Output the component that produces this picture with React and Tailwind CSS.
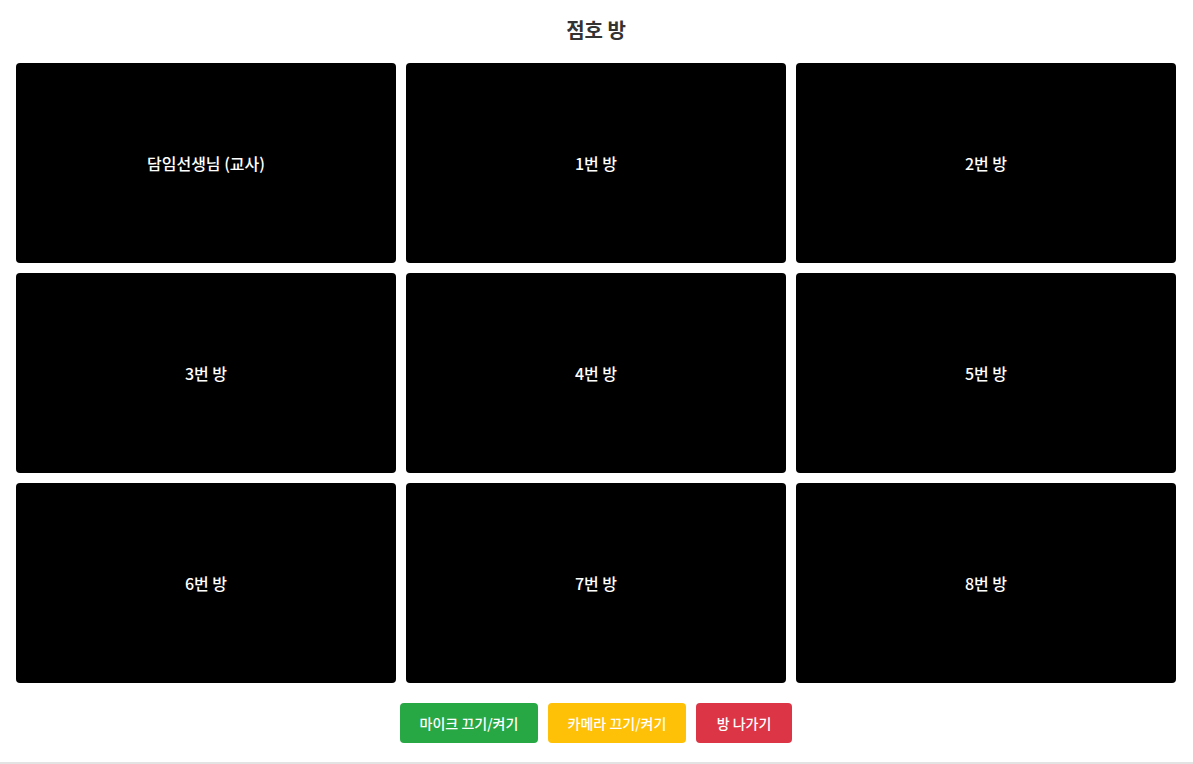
import React from "react";

const rooms = ["담임선생님 (교사)", "1번 방", "2번 방", "3번 방", "4번 방", "5번 방", "6번 방", "7번 방", "8번 방"];

export default function App() {
  return (
    <div
      className="bg-white flex flex-col h-[764px]"
      style={{ fontFamily: '"Noto Sans CJK KR", "Noto Sans", sans-serif' }}
    >
      <div className="pl-4 pr-[17px] pt-4 flex-1">
        <h2 className="text-center text-[20px] leading-7 font-bold text-[#333333] mb-[19px]">점호 방</h2>
        <div className="grid grid-cols-3 gap-[10px]">
          {rooms.map((r) => (
            <div key={r} className="h-[200px] bg-black rounded flex items-center justify-center text-white text-[16px] font-medium">
              {r}
            </div>
          ))}
        </div>
        <div className="flex justify-center gap-[10px] mt-5">
          <button className="h-10 w-[138px] rounded bg-[#28a745] text-white text-[14px] font-medium">마이크 끄기/켜기</button>
          <button className="h-10 w-[138px] rounded bg-[#ffc107] text-white text-[14px] font-medium">카메라 끄기/켜기</button>
          <button className="h-10 w-[96px] rounded bg-[#dc3545] text-white text-[14px] font-medium">방 나가기</button>
        </div>
      </div>
      <div className="h-[2px] bg-[#e3e3e3]" />
    </div>
  );
}
